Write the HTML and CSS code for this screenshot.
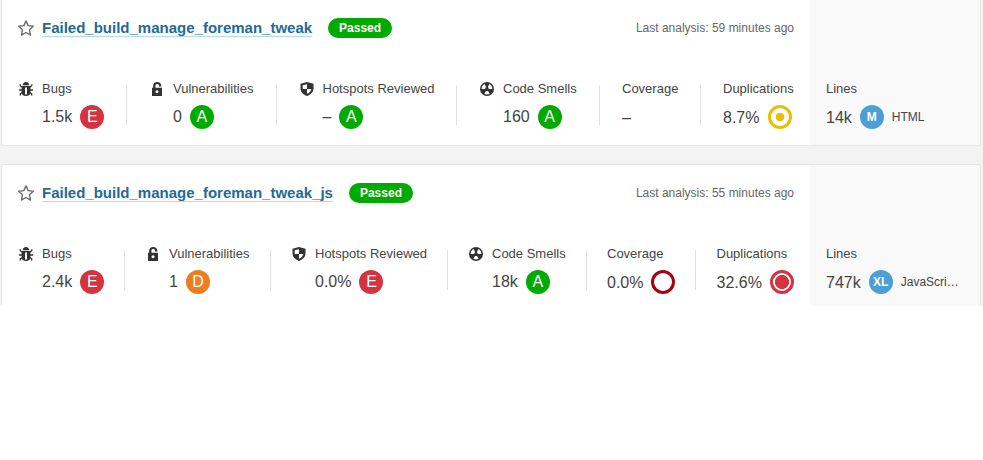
FILE: index.html
```html
<!DOCTYPE html>
<html lang="en">
<head>
<meta charset="utf-8">
<title>Projects</title>
<link rel="stylesheet" href="styles.css">
</head>
<body>
<svg class="defs" width="0" height="0">
  <symbol id="star" viewBox="0 0 16 16"><path d="M8 .9l2.200 4.700 5.100.6-3.800 3.500 1 5.400L8 12.500l-4.500 2.600 1-5.400L.7 6.200l5.100-.6z" fill="none" stroke="#6c6c6c" stroke-width="1.400" stroke-linejoin="round"/></symbol>
  <symbol id="bug" viewBox="0 0 14 14"><path fill="#333" fill-rule="evenodd" d="M3.700 3.200C3.900 1.300 5 0 7 0s3.100 1.300 3.300 3.200zM2.600 4h8.800v6.200c0 2.200-1.600 3.800-4.400 3.800s-4.400-1.600-4.400-3.800zM6 5.400v7h2V5.400z"/><path fill="none" stroke="#333" stroke-width="1.300" d="M3.400 5.200L1.200 3.700V2.200M10.600 5.200L12.800 3.700V2.200M3 8H0M11 8H14M3.200 10.400l-1.900 1.400V13.600M10.800 10.400l1.900 1.400V13.600"/></symbol>
  <symbol id="lock" viewBox="0 0 14 14"><path fill="#333" fill-rule="evenodd" d="M2 5.800h1.100V3.900C3.100 1.500 4.700 0 7.200 0s4.100 1.500 4.100 3.600v1H9v-.9c0-1-.6-1.700-1.800-1.700s-1.800.7-1.800 1.900v1.900H12V14H2zM7 8.200a1.500 1.500 0 1 0 .01 0z"/></symbol>
  <symbol id="shield" viewBox="0 0 14 14"><path fill="#333" fill-rule="evenodd" d="M7 0l6.500 1.700v4.800c0 3.500-2.800 6.100-6.500 7.500C3.300 12.600.5 10 .5 6.500V1.700zM7 2.300L2.700 3.200V7H7zM7 7v4.700c2.400-.9 4.100-2.600 4.300-4.700z"/></symbol>
  <symbol id="smell" viewBox="0 0 14 14"><circle cx="7" cy="7" r="7" fill="#333"/><path fill="#fff" d="M4.600 1.900L6.100 4.900 5 6.900H1.600C1.600 4.700 2.800 2.800 4.600 1.900zM9.400 1.900L7.900 4.900 9 6.900h3.400C12.400 4.700 11.200 2.800 9.400 1.900zM6 8.900h2l1.700 2.800c-1.600 1-3.800 1-5.400 0z"/></symbol>
</svg>
<main class="list">
  <article class="card first">
    <div class="main">
      <header class="head">
        <svg class="star"><use href="#star"/></svg><a class="name">Failed_build_manage_foreman_tweak</a><span class="status">Passed</span>
        <span class="date">Last analysis: 59 minutes ago</span>
      </header>
      <div class="measures">
        <div class="measure"><svg class="icon"><use href="#bug"/></svg><div><div class="label">Bugs</div><div class="value">1.5k<b class="rating e">E</b></div></div></div>
        <div class="measure"><svg class="icon"><use href="#lock"/></svg><div><div class="label">Vulnerabilities</div><div class="value">0<b class="rating a">A</b></div></div></div>
        <div class="measure hotspots"><svg class="icon"><use href="#shield"/></svg><div><div class="label">Hotspots Reviewed</div><div class="value">–<b class="rating a">A</b></div></div></div>
        <div class="measure"><svg class="icon"><use href="#smell"/></svg><div><div class="label">Code Smells</div><div class="value">160<b class="rating a">A</b></div></div></div>
        <div class="measure"><div><div class="label">Coverage</div><div class="value low"><span>–</span></div></div></div>
        <div class="measure dup"><div><div class="label">Duplications</div><div class="value low"><span>8.7%</span><i class="ring mid"></i></div></div></div>
      </div>
    </div>
    <aside class="side"><div class="label">Lines</div><div class="value low"><span>14k</span><b class="size">M</b><span class="lang">HTML</span></div></aside>
  </article>
  <article class="card second">
    <div class="main">
      <header class="head">
        <svg class="star"><use href="#star"/></svg><a class="name">Failed_build_manage_foreman_tweak_js</a><span class="status">Passed</span>
        <span class="date">Last analysis: 55 minutes ago</span>
      </header>
      <div class="measures">
        <div class="measure"><svg class="icon"><use href="#bug"/></svg><div><div class="label">Bugs</div><div class="value">2.4k<b class="rating e">E</b></div></div></div>
        <div class="measure"><svg class="icon"><use href="#lock"/></svg><div><div class="label">Vulnerabilities</div><div class="value">1<b class="rating d">D</b></div></div></div>
        <div class="measure"><svg class="icon"><use href="#shield"/></svg><div><div class="label">Hotspots Reviewed</div><div class="value">0.0%<b class="rating e">E</b></div></div></div>
        <div class="measure"><svg class="icon"><use href="#smell"/></svg><div><div class="label">Code Smells</div><div class="value">18k<b class="rating a">A</b></div></div></div>
        <div class="measure"><div><div class="label">Coverage</div><div class="value low"><span>0.0%</span><i class="ring none"></i></div></div></div>
        <div class="measure dup"><div><div class="label">Duplications</div><div class="value low"><span>32.6%</span><i class="ring high"></i></div></div></div>
      </div>
    </div>
    <aside class="side"><div class="label">Lines</div><div class="value low"><span>747k</span><b class="size">XL</b><span class="lang">JavaScri…</span></div></aside>
  </article>
</main>
</body>
</html>
```
FILE: styles.css
```css
* { box-sizing: border-box; }
body { margin: 0; background: #fff; color: #444; font: 13px/16px "Liberation Sans", Arial, sans-serif; }
.defs { display: block; height: 0; }
.list { height: 306px; overflow: hidden; background: #f3f3f3; padding: 0 2px 0 1px; display: flex; flex-direction: column; gap: 18px; }
.card { flex: none; display: flex; border: 1px solid #e6e6e6; border-radius: 3px; background: #fff; overflow: hidden; }
.first { height: 146px; border-top: 0; border-radius: 0 0 3px 3px; }
.second { height: 160px; }
.main { width: 808px; padding: 17px 16px 0; }
.head { display: flex; align-items: center; height: 22px; }
.star { width: 16px; height: 16px; margin-right: 8px; flex: none; }
.name { font-size: 15px; line-height: 17px; font-weight: 700; color: #236a97; border-bottom: 1px solid #b5d9ec; }
.status { margin-left: 16px; width: 64px; height: 20px; border-radius: 10px; background: #00aa00; color: #fff; font-size: 12px; font-weight: 700; line-height: 20px; text-align: center; }
.date { margin-left: auto; font-size: 12px; color: #666; }
.measures { display: grid; margin-top: 42px; }
.first .measures { grid-template-columns: 108px 150px 180px 143px 101px 1fr; }
.second .measures { grid-template-columns: 106px 146px 177px 139px 109px 1fr; }
.measure { position: relative; display: flex; white-space: nowrap; }
.first .measure + .measure { padding-left: 23px; }
.second .measure + .measure { padding-left: 21px; }
.first .measure.hotspots { padding-left: 22.500px; }
.first .measure.dup { padding-left: 23px; }
.second .measure.dup { padding-left: 21.500px; }
.measure + .measure::before { content: ""; position: absolute; left: 0; top: 4px; width: 1px; height: 40px; background: #e0e0e0; }
.icon { width: 14px; height: 14px; margin: 1px 9px 0 1px; flex: none; }
.label { height: 16px; }
.value { display: flex; align-items: center; height: 24px; margin-top: 8px; font-size: 16px; white-space: nowrap; }
.low > span:first-child { padding-top: 2px; }
.rating, .size, .ring { width: 24px; height: 24px; border-radius: 50%; margin-left: 8px; flex: none; }
.mid { margin-left: 9px; }
.rating, .size { color: #fff; text-align: center; line-height: 24px; font-weight: 400; }
.e { background: #d4333f; }
.d { background: #ed7d20; }
.a { background: #00aa00; }
.size { background: #4b9fd5; font-size: 12px; font-weight: 700; }
.ring { border: 3px solid; }
.mid { border-color: #eabe06; background: radial-gradient(circle, #eabe06 4px, #fff 4.600px); }
.none { border-color: #a4030f; }
.high { border-color: #d4333f; background: radial-gradient(circle, #d4333f 6.700px, #fff 7.300px); }
.side { flex: 1; background: #f9f9f9; padding: 81px 16px 0; }
.lang { font-size: 12px; margin-left: 8px; }
```
